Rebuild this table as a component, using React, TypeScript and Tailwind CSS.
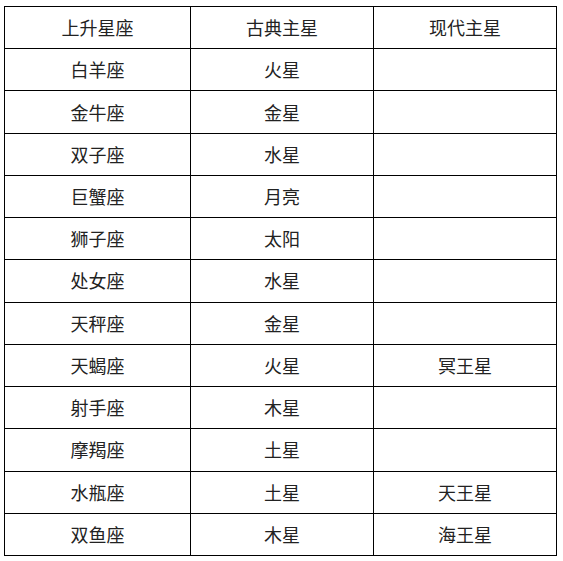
const rows = [
  ['上升星座', '古典主星', '现代主星'],
  ['白羊座', '火星', ''],
  ['金牛座', '金星', ''],
  ['双子座', '水星', ''],
  ['巨蟹座', '月亮', ''],
  ['狮子座', '太阳', ''],
  ['处女座', '水星', ''],
  ['天秤座', '金星', ''],
  ['天蝎座', '火星', '冥王星'],
  ['射手座', '木星', ''],
  ['摩羯座', '土星', ''],
  ['水瓶座', '土星', '天王星'],
  ['双鱼座', '木星', '海王星'],
]

export default function App() {
  return (
    <div
      className="w-[563px] h-[561px] bg-white pt-[6px] pl-[4px]"
      style={{ fontFamily: '"Noto Sans CJK SC", "Noto Sans", sans-serif' }}
    >
      <div className="grid w-[553px] h-[550px] grid-cols-[186px_183px_183px] grid-rows-[repeat(13,minmax(0,1fr))] border-t border-l border-black text-[18px] text-[#222]">
        {rows.map((r, ri) =>
          r.map((c, i) => (
            <div
              key={`${ri}-${i}`}
              className="flex items-center justify-center border-r border-b border-black"
            >
              {c}
            </div>
          ))
        )}
      </div>
    </div>
  )
}
